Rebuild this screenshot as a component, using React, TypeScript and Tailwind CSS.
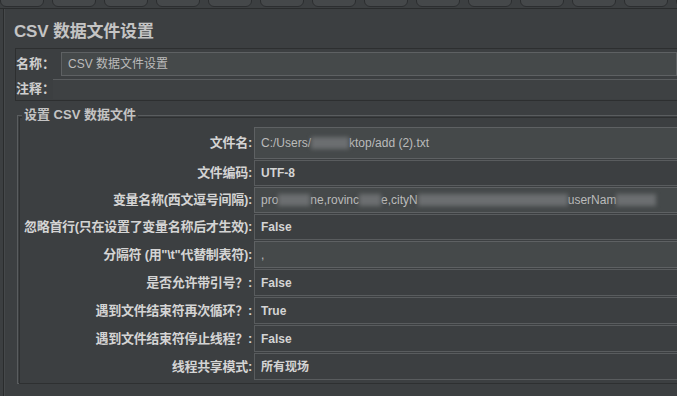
import React from 'react';

const CJK = { fontFamily: '"Liberation Sans", "Noto Sans CJK SC", sans-serif' };

type Row = {
  label: string;
  value: React.ReactNode;
  light?: boolean;
  bold?: boolean;
  h: string;
};

function Blur({ w }: { w: string }) {
  return <span className={`inline-block h-[12px] ${w} bg-[#6b6e70] blur-[2px] align-middle`} />;
}

const ROWS: Row[] = [
  {
    label: '文件名:',
    light: true,
    h: 'h-[32px]',
    value: (
      <span className="flex items-center">
        C:/Users/<Blur w="w-[38px]" />ktop/add (2).txt
      </span>
    ),
  },
  { label: '文件编码:', value: 'UTF-8', bold: true, h: 'h-[26px]' },
  {
    label: '变量名称(西文逗号间隔):',
    light: true,
    h: 'h-[26px]',
    value: (
      <span className="flex items-center whitespace-nowrap">
        pro<Blur w="w-[32px]" />ne,rovinc<Blur w="w-[22px]" />e,cityN<Blur w="w-[150px]" />userNam<Blur w="w-[40px]" />
      </span>
    ),
  },
  { label: '忽略首行(只在设置了变量名称后才生效):', value: 'False', bold: true, h: 'h-[26px]' },
  { label: '分隔符 (用"\\t"代替制表符):', value: ',', light: true, h: 'h-[27px]' },
  { label: '是否允许带引号？:', value: 'False', bold: true, h: 'h-[27px]' },
  { label: '遇到文件结束符再次循环？:', value: 'True', bold: true, h: 'h-[27px]' },
  { label: '遇到文件结束符停止线程？:', value: 'False', bold: true, h: 'h-[27px]' },
  { label: '线程共享模式:', value: '所有现场', bold: true, h: 'h-[27px]' },
];

export default function App() {
  return (
    <div className="w-[677px] h-[396px] bg-[#3c3f41] overflow-hidden flex flex-col text-[12px] text-[#bbbbbb]" style={CJK}>
      {/* toolbar remnants */}
      <div className="h-[8px] overflow-hidden flex gap-[8px] bg-[#3c3f41]">
        {Array.from({ length: 14 }).map((_, i) => (
          <div key={i} className="shrink-0 w-[44px] h-[24px] -mt-[17px] rounded-[6px] border border-[#2c2e30] bg-[#45484a]" />
        ))}
      </div>
      <div className="h-[1px] bg-[#2a2c2d]" />
      <div className="flex-1 flex ml-[3px] border-l border-[#2a2c2d]">
        <div className="flex-1 flex flex-col border-l border-[#46494b] pl-[10px] pt-[12px]">
          <div className="text-[17px] font-bold leading-[22px] text-[#c4c4c4] -ml-[1px] tracking-[-0.2px]">CSV 数据文件设置</div>

          {/* name / comments */}
          <div className="mt-[5px] border-t border-l border-b border-[#2d2f30] flex flex-col pt-[2px] text-[13px]">
            <div className="flex items-center h-[25px]">
              <span className="w-[45px] shrink-0 whitespace-nowrap font-bold text-[#d0d0d0]">名称：</span>
              <div className="flex-1 h-[24px] bg-[#45494a] border border-[#5e6163] flex items-center pl-[6px] text-[12px] text-[#bbbbbb]">
                CSV 数据文件设置
              </div>
            </div>
            <div className="flex items-center h-[23px] mt-[1px]">
              <span className="w-[37px] shrink-0 whitespace-nowrap font-bold text-[#d0d0d0]">注释：</span>
              <div className="flex-1 h-[20px] bg-[#3e4143] border-t border-[#5a5d5f]" />
            </div>
          </div>

          {/* fieldset */}
          <div className="relative mt-[14px] ml-[2px] h-[269px] border-t border-l border-b border-[#5a5d5f]">
            <div className="absolute inset-0 border-t border-l border-b border-[#2e3031] translate-x-[1px] translate-y-[1px] pointer-events-none" />
            <span className="absolute -top-[9px] left-[4px] px-[2px] bg-[#3c3f41] font-bold text-[13px] text-[#c4c4c4] leading-[16px]">设置 CSV 数据文件</span>
            <div className="flex flex-col gap-[1px] pt-[11px]">
              {ROWS.map((r) => (
                <div key={r.label} className={`flex items-center ${r.h}`}>
                  <span className="w-[236px] flex justify-end font-bold text-[13px] text-[#d4d4d4] whitespace-nowrap pr-[2px]">
                    <span className="tracking-[-0.3px]">{r.label}</span>
                  </span>
                  <div
                    className={`flex-1 h-full flex items-center pl-[6px] border-t border-l border-b ${
                      r.light ? 'bg-[#45494a] border-[#5e6163]' : 'bg-[#3c3f41] border-[#595c5e]'
                    } ${r.bold ? 'font-bold text-[#d4d4d4]' : 'text-[#bbbbbb]'}`}
                  >
                    {r.value}
                  </div>
                </div>
              ))}
            </div>
          </div>
        </div>
      </div>
    </div>
  );
}
